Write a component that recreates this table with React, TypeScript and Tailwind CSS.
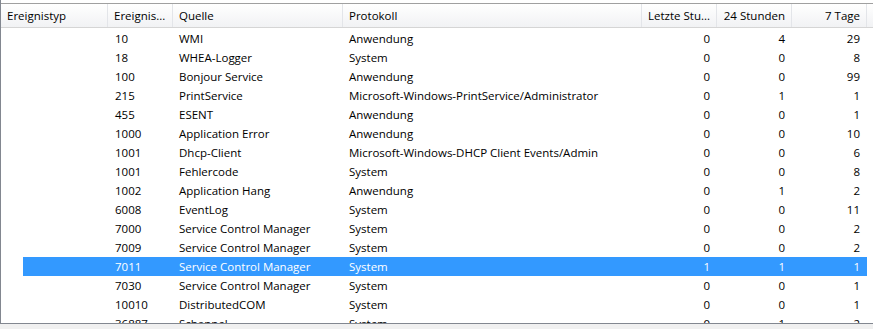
const rows: [string, string, string, number, number, number][] = [
  ["10", "WMI", "Anwendung", 0, 4, 29],
  ["18", "WHEA-Logger", "System", 0, 0, 8],
  ["100", "Bonjour Service", "Anwendung", 0, 0, 99],
  ["215", "PrintService", "Microsoft-Windows-PrintService/Administrator", 0, 1, 1],
  ["455", "ESENT", "Anwendung", 0, 0, 1],
  ["1000", "Application Error", "Anwendung", 0, 0, 10],
  ["1001", "Dhcp-Client", "Microsoft-Windows-DHCP Client Events/Admin", 0, 0, 6],
  ["1001", "Fehlercode", "System", 0, 0, 8],
  ["1002", "Application Hang", "Anwendung", 0, 1, 2],
  ["6008", "EventLog", "System", 0, 0, 11],
  ["7000", "Service Control Manager", "System", 0, 0, 2],
  ["7009", "Service Control Manager", "System", 0, 0, 2],
  ["7011", "Service Control Manager", "System", 1, 1, 1],
  ["7030", "Service Control Manager", "System", 0, 0, 1],
  ["10010", "DistributedCOM", "System", 0, 0, 1],
  ["36887", "Schannel", "System", 0, 1, 2],
];

const SELECTED = 12;

function HeadCell({ w, label, right }: { w: string; label: string; right?: boolean }) {
  return (
    <div
      className={`${w} shrink-0 h-full flex items-center pt-[1px] px-[6px] border-r border-[#e3e5e9] ${right ? "justify-end" : ""}`}
    >
      <span className="truncate">{label}</span>
    </div>
  );
}

export default function App() {
  return (
    <div
      className="w-[873px] h-[329px] bg-[#f0f0f0] overflow-hidden text-[11.5px] text-black"
      style={{ fontFamily: '"Segoe UI", "Open Sans", sans-serif' }}
    >
      <div className="h-[324px] pt-[3px] bg-white border-l border-b border-[#828790] flex flex-col overflow-hidden">
        <div className="h-[25px] shrink-0 flex border-t border-b border-t-[#a0a0a0] border-b-[#d5d5d5] bg-gradient-to-b from-white to-[#f1f2f4]">
          <HeadCell w="w-[107px]" label="Ereignistyp" />
          <HeadCell w="w-[65px]" label="Ereignis..." />
          <HeadCell w="w-[170px]" label="Quelle" />
          <HeadCell w="w-[299px]" label="Protokoll" />
          <HeadCell w="w-[75px]" label="Letzte Stu..." right />
          <HeadCell w="w-[75px]" label="24 Stunden" right />
          <HeadCell w="w-[75px]" label="7 Tage" right />
        </div>
        <div className="flex flex-col pt-[1px]">
          {rows.map((r, i) => {
            const sel = i === SELECTED;
            return (
              <div key={i} className="h-[19px] shrink-0 flex">
                <div className="w-[22px] shrink-0" />
                <div className={`flex items-center h-full pt-[1px] ${sel ? "bg-[#3399ff] text-white" : ""}`}>
                  <div className="w-[85px] shrink-0" />
                  <div className="w-[65px] shrink-0 pl-[7px] whitespace-nowrap">{r[0]}</div>
                  <div className="w-[170px] shrink-0 pl-[6px] whitespace-nowrap">{r[1]}</div>
                  <div className="w-[299px] shrink-0 pl-[6px] whitespace-nowrap">{r[2]}</div>
                  <div className="w-[75px] shrink-0 pr-[7px] text-right">{r[3]}</div>
                  <div className="w-[75px] shrink-0 pr-[7px] text-right">{r[4]}</div>
                  <div className="w-[75px] shrink-0 pr-[7px] text-right">{r[5]}</div>
                </div>
              </div>
            );
          })}
        </div>
      </div>
    </div>
  );
}
